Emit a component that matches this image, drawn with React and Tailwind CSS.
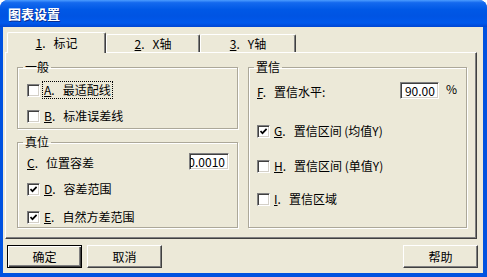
import React from 'react';

// Classic Win32 sunken edge used by the check boxes and edit fields
const sunken =
  'border border-t-[#808080] border-l-[#808080] border-r-white border-b-white shadow-[inset_1px_1px_0_#404040,inset_-1px_-1px_0_#D4D0C8]';

const CheckBox = ({ checked }) => (
  <span className={`w-[13px] h-[13px] shrink-0 bg-white flex items-center justify-center ${sunken}`}>
    {checked && (
      <svg width="7" height="7" viewBox="0 0 7 7">
        <path d="M0.5 3 L2.5 5.2 L6.6 0.9" stroke="#000" strokeWidth="1.7" fill="none" />
      </svg>
    )}
  </span>
);

const CheckRow = ({ letter, label, checked, focused, className = '' }) => (
  <div className={`flex items-center h-[16px] ${className}`}>
    <CheckBox checked={checked} />
    <span
      className={`ml-[3px] px-[1px] h-[16px] flex items-center leading-[12px] whitespace-nowrap ${
        focused ? 'outline outline-1 outline-dotted outline-black' : ''
      }`}
    >
      <span className="underline">{letter}</span>.<span className="ml-[8px]">{label}</span>
    </span>
  </div>
);

const Label = ({ letter, label }) => (
  <span className="leading-[12px] whitespace-nowrap">
    <span className="underline">{letter}</span>.<span className="ml-[8px]">{label}</span>
  </span>
);

const EditBox = ({ value, width }) => (
  <div
    className={`${width} h-[17px] bg-white flex items-center justify-end pr-[3px] overflow-hidden whitespace-nowrap leading-[12px] ${sunken}`}
  >
    {value}
  </div>
);

const Button = ({ children, isDefault, className = '' }) => (
  <button
    className={`w-[75px] h-[23px] bg-[#ECE9D8] text-[12px] leading-[12px] text-black flex items-center justify-center ${
      isDefault
        ? 'border border-black shadow-[inset_1px_1px_0_#fff,inset_-1px_-1px_0_#404040,inset_-2px_-2px_0_#808080]'
        : 'border border-t-white border-l-white border-r-[#404040] border-b-[#404040] shadow-[inset_-1px_-1px_0_#808080]'
    } ${className}`}
  >
    {children}
  </button>
);

const Tab = ({ num, label, active, width }) => (
  <div
    className={`${width} flex items-center justify-center bg-[#ECE9D8] rounded-t-[2px] border-t border-l border-t-white border-l-white border-r border-r-[#404040] shadow-[inset_-1px_0_0_#808080] ${
      active ? 'h-[21px] relative z-10 -mb-[1px] pb-[1px]' : 'h-[18px]'
    }`}
  >
    <span className="leading-[12px] whitespace-nowrap">
      <span className="underline">{num}</span>.<span className="ml-[8px]">{label}</span>
    </span>
  </div>
);

const Group = ({ title, className = '', legendClass = '', children }) => (
  <fieldset
    className={`border border-[#ACA899] shadow-[inset_1px_1px_0_#fff,1px_1px_0_#fff] ${className}`}
  >
    <legend className={`px-[2px] leading-[12px] text-[12px] ${legendClass}`}>{title}</legend>
    {children}
  </fieldset>
);

export default function App() {
  return (
    <div className="w-[487px] h-[277px] bg-[#0052E0] rounded-t-[8px] flex flex-col overflow-hidden text-[12px] text-black font-['Noto_Sans_CJK_SC',sans-serif]">
      {/* title bar */}
      <div className="h-[27px] shrink-0 flex items-center pl-[8px] text-white font-bold text-[13px] [text-shadow:1px_1px_#0A2D8F] bg-[linear-gradient(to_bottom,#4C9CFF_0%,#1469EE_10%,#0058E6_35%,#0054E3_60%,#0059EC_85%,#0046D2_100%)]">
        图表设置
      </div>

      {/* client area */}
      <div className="flex-1 ml-[3px] mr-[4px] mb-[4px] bg-[#ECE9D8] flex flex-col px-[2px] pt-[5px]">
        {/* tabs */}
        <div className="flex items-end h-[20px] ml-[2px]">
          <Tab num="1" label="标记" active width="w-[99px]" />
          <Tab num="2" label="X轴" width="w-[94px]" />
          <Tab num="3" label="Y轴" width="w-[96px]" />
        </div>

        {/* tab page */}
        <div className="w-[472px] h-[187px] border border-t-white border-l-white border-r-[#404040] border-b-[#404040] shadow-[inset_-1px_-1px_0_#808080] flex gap-[10px] pl-[11px] pt-[8px]">
          {/* left column */}
          <div className="w-[221px] flex flex-col">
            <Group title="一般" className="h-[68px] pl-[9px] pr-[8px]" legendClass="-ml-[4px]">
              <CheckRow letter="A" label="最适配线" focused className="mt-[9px]" />
              <CheckRow letter="B" label="标准误差线" className="mt-[10px]" />
            </Group>

            <Group title="真位" className="h-[92px] mt-[7px] pl-[9px] pr-[8px]" legendClass="-ml-[4px]">
              <div className="flex items-start justify-between mt-[5px]">
                <span className="mt-[1px]">
                  <Label letter="C" label="位置容差" />
                </span>
                <EditBox value="0.0010" width="w-[40px]" />
              </div>
              <CheckRow letter="D" label="容差范围" checked className="mt-[9px]" />
              <CheckRow letter="E" label="自然方差范围" checked className="mt-[12px]" />
            </Group>
          </div>

          {/* right column */}
          <div className="w-[219px] flex flex-col">
            <Group title="置信" className="h-[167px] pl-[8px] pr-[9px]" legendClass="-ml-[3px]">
              <div className="flex items-start mt-[9px]">
                <span className="flex-1 mt-[1px]">
                  <Label letter="F" label="置信水平:" />
                </span>
                <EditBox value="90.00" width="w-[39px]" />
                <span className="ml-[7px] mt-[1px] leading-[12px]">%</span>
              </div>
              <CheckRow letter="G" label="置信区间 (均值Y)" checked className="mt-[22px]" />
              <CheckRow letter="H" label="置信区间 (单值Y)" className="mt-[19px]" />
              <CheckRow letter="I" label="置信区域" className="mt-[17px]" />
            </Group>
          </div>
        </div>

        {/* buttons */}
        <div className="flex mt-[6px] ml-[2px] mr-[3px]">
          <Button isDefault>确定</Button>
          <Button className="ml-[5px]">取消</Button>
          <Button className="ml-auto">帮助</Button>
        </div>
      </div>
    </div>
  );
}
